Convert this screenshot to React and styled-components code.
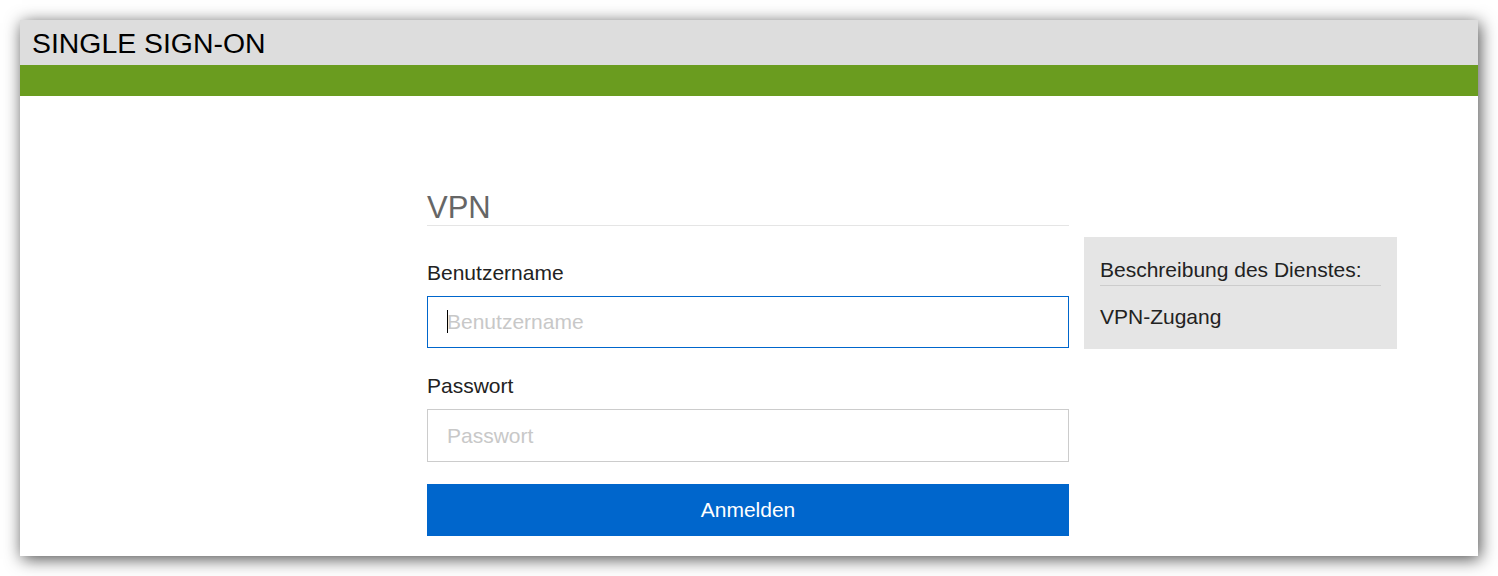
import React from "react";
import styled, { createGlobalStyle } from "styled-components";

const GlobalStyle = createGlobalStyle`
  html, body {
    margin: 0;
    padding: 0;
    background: #ffffff;
    font-family: "Liberation Sans", Arial, sans-serif;
  }
  * { box-sizing: border-box; }
`;

// Page frame
const Page = styled.div`
  padding: 20px;
  width: 1498px;
  height: 576px;
`;

const Card = styled.div`
  height: 536px;
  background: #ffffff;
  box-shadow: 2px 3px 16px rgba(0, 0, 0, 0.7);
  overflow: hidden;
`;

const TopBar = styled.header`
  height: 45px;
  background: #dddddd;
  padding-left: 12px;
  font-size: 28.4px;
  line-height: 46px;
  color: #000000;
`;

const GreenBar = styled.div`
  height: 31px;
  background: #6a9c1f;
`;

// Content
const Main = styled.main`
  display: flex;
  align-items: flex-start;
  gap: 15px;
  padding: 94px 0 0 407px;
`;

const FormColumn = styled.form`
  width: 642px;
  display: flex;
  flex-direction: column;
`;

const Title = styled.h2`
  margin: 0 0 34px;
  font-size: 31px;
  font-weight: normal;
  line-height: 35px;
  color: #666666;
  border-bottom: 1px solid #e5e5e5;
`;

const Label = styled.label`
  display: block;
  font-size: 21px;
  line-height: 25px;
  color: #222222;
  margin-bottom: 11px;
`;

const FieldWrap = styled.div`
  position: relative;
  margin-bottom: ${(p) => p.$gap}px;
`;

const Input = styled.input`
  display: block;
  width: 100%;
  height: ${(p) => p.$height || 52}px;
  padding: 0 19px;
  border: 1px solid ${(p) => (p.$active ? "#0066cc" : "#cccccc")};
  border-radius: 0;
  outline: none;
  font-family: "Liberation Sans", Arial, sans-serif;
  font-size: 21px;
  color: #222222;

  &::placeholder {
    color: #c8c8c8;
  }
`;

const Caret = styled.span`
  position: absolute;
  left: 20px;
  top: 14px;
  width: 1px;
  height: 23px;
  background: #000000;
`;

const SubmitButton = styled.button`
  width: 100%;
  height: 52px;
  border: none;
  border-radius: 0;
  background: #0066cc;
  color: #ffffff;
  font-family: "Liberation Sans", Arial, sans-serif;
  font-size: 21px;
  cursor: pointer;
`;

// Sidebar
const InfoBox = styled.aside`
  width: 313px;
  margin-top: 47px;
  background: #e5e5e5;
  padding: 20px 16px 20px;
  color: #222222;
  font-size: 21px;
  line-height: 25px;
`;

const InfoTitle = styled.div`
  padding-bottom: 3px;
  border-bottom: 1px solid #cccccc;
  margin-bottom: 18px;
`;

const InfoText = styled.div``;

const App = () => {
  return (
    <>
      <GlobalStyle />
      <Page>
        <Card>
          <TopBar>SINGLE SIGN-ON</TopBar>
          <GreenBar />
          <Main>
            <FormColumn onSubmit={(e) => e.preventDefault()}>
              <Title>VPN</Title>
              <Label htmlFor="user">Benutzername</Label>
              <FieldWrap $gap={25}>
                <Input id="user" $active placeholder="Benutzername" />
                <Caret />
              </FieldWrap>
              <Label htmlFor="pass">Passwort</Label>
              <FieldWrap $gap={22}>
                <Input id="pass" type="password" $height={53} placeholder="Passwort" />
              </FieldWrap>
              <SubmitButton type="submit">Anmelden</SubmitButton>
            </FormColumn>
            <InfoBox>
              <InfoTitle>Beschreibung des Dienstes:</InfoTitle>
              <InfoText>VPN-Zugang</InfoText>
            </InfoBox>
          </Main>
        </Card>
      </Page>
    </>
  );
};

export default App;
